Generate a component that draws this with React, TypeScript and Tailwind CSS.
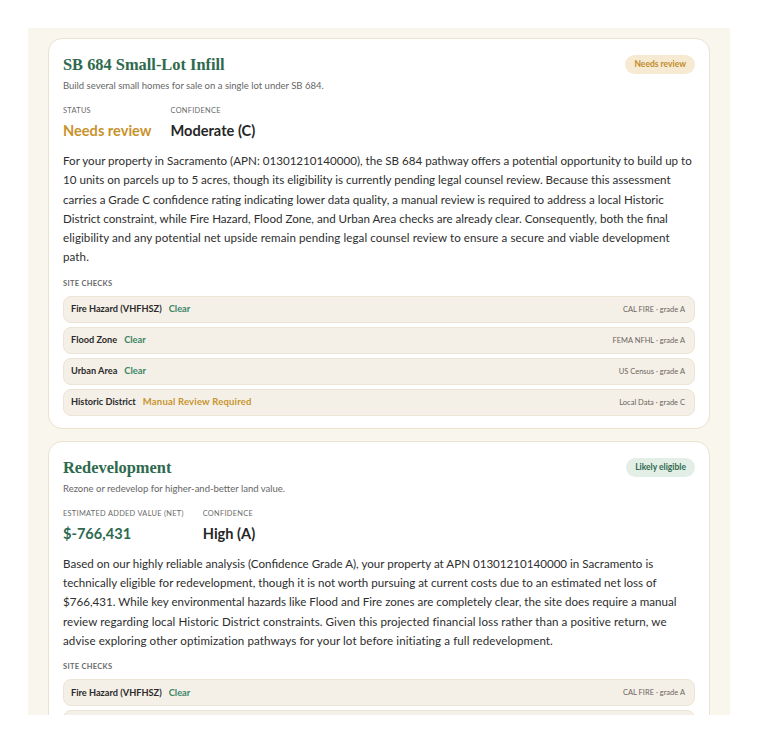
import React from 'react';

type Check = {
  name: string;
  status: string;
  tone: 'clear' | 'review';
  source: string;
};

type Pathway = {
  title: string;
  subtitle: string;
  badge: string;
  badgeTone: 'review' | 'eligible';
  leftLabel: string;
  leftValue: string;
  leftTone: 'gold' | 'green';
  confidence: string;
  summary: string;
  summaryTail: string;
  checks: Check[];
};

const siteChecks: Check[] = [
  { name: 'Fire Hazard (VHFHSZ)', status: 'Clear', tone: 'clear', source: 'CAL FIRE · grade A' },
  { name: 'Flood Zone', status: 'Clear', tone: 'clear', source: 'FEMA NFHL · grade A' },
  { name: 'Urban Area', status: 'Clear', tone: 'clear', source: 'US Census · grade A' },
  { name: 'Historic District', status: 'Manual Review Required', tone: 'review', source: 'Local Data · grade C' },
];

const pathways: Pathway[] = [
  {
    title: 'SB 684 Small-Lot Infill',
    subtitle: 'Build several small homes for sale on a single lot under SB 684.',
    badge: 'Needs review',
    badgeTone: 'review',
    leftLabel: 'Status',
    leftValue: 'Needs review',
    leftTone: 'gold',
    confidence: 'Moderate (C)',
    summary:
      'For your property in Sacramento (APN: 01301210140000), the SB 684 pathway offers a potential opportunity to build up to 10 units on parcels up to 5 acres, though its eligibility is currently pending legal counsel review. Because this assessment carries a Grade C confidence rating indicating lower data quality, a manual review is required to address a local Historic District constraint, while Fire Hazard, Flood Zone, and Urban Area checks are already clear. Consequently, both the final ',
    summaryTail:
      'eligibility and any potential net upside remain pending legal counsel review to ensure a secure and viable development path.',
    checks: siteChecks,
  },
  {
    title: 'Redevelopment',
    subtitle: 'Rezone or redevelop for higher-and-better land value.',
    badge: 'Likely eligible',
    badgeTone: 'eligible',
    leftLabel: 'Estimated added value (net)',
    leftValue: '$-766,431',
    leftTone: 'green',
    confidence: 'High (A)',
    summary:
      'Based on our highly reliable analysis (Confidence Grade A), your property at APN 01301210140000 in Sacramento is technically eligible for redevelopment, though it is not worth pursuing at current costs due to an estimated net loss of $766,431. While key environmental hazards like Flood and Fire zones are completely clear, the site does require a manual ',
    summaryTail:
      'review regarding local Historic District constraints. Given this projected financial loss rather than a positive return, we advise exploring other optimization pathways for your lot before initiating a full redevelopment.',
    checks: siteChecks,
  },
];

const CheckRow: React.FC<{ check: Check }> = ({ check }) => (
  <div className="flex h-[27px] shrink-0 items-center justify-between rounded-lg border border-[#ece4d4] bg-[#f5f0e7] pl-[7px] pr-[9px]">
    <div className="flex items-center gap-[7px] font-bold">
      <span className="text-[9.2px] text-[#2b2b2b]">{check.name}</span>
      <span
        className={
          check.tone === 'clear'
            ? 'text-[9.3px] text-[#3a8566]'
            : 'text-[9.5px] tracking-[0.02em] text-[#c8942f]'
        }
      >
        {check.status}
      </span>
    </div>
    <span className="text-[7.5px] text-[#6a6560]">{check.source}</span>
  </div>
);

const PathwayCard: React.FC<{ p: Pathway }> = ({ p }) => (
  <div className="shrink-0 rounded-[14px] border border-[#ebe2cf] bg-white px-[14px] pt-4 pb-3">
    <div className="flex items-start justify-between">
      <h2 className="font-['Liberation_Serif',serif] text-[16.4px] leading-[20px] font-bold text-[#2e6a4e]">
        {p.title}
      </h2>
      <span
        className={
          p.badgeTone === 'review'
            ? 'rounded-full bg-[#f6ead2] px-[9px] py-[4px] text-[8.5px] leading-[11px] font-bold text-[#c28b2a]'
            : 'rounded-full bg-[#e3eee7] px-[9px] py-[4px] text-[8.5px] leading-[11px] font-bold text-[#2e6a4e]'
        }
      >
        {p.badge}
      </span>
    </div>
    <p className="mt-1 text-[9.5px] leading-[14px] text-[#666]">{p.subtitle}</p>

    <div className="mt-[13px] flex gap-[19px]">
      <div className="flex flex-col">
        <span className="text-[7.4px] leading-[10px] tracking-[0.04em] text-[#6a6a6a] uppercase">
          {p.leftLabel}
        </span>
        <span
          className={
            p.leftTone === 'gold'
              ? 'mt-[5px] text-[14.6px] leading-[20px] font-bold text-[#c8922d]'
              : 'mt-[5px] text-[14.6px] leading-[20px] font-bold text-[#2e6a4e]'
          }
        >
          {p.leftValue}
        </span>
      </div>
      <div className="flex flex-col">
        <span className="text-[7.4px] leading-[10px] tracking-[0.04em] text-[#6a6a6a] uppercase">
          Confidence
        </span>
        <span className="mt-[5px] text-[14.6px] leading-[20px] font-bold text-[#262626]">
          {p.confidence}
        </span>
      </div>
    </div>

    <p className="mt-[10px] text-[11.6px] leading-[19.3px] text-[#2e2e2e]">
      {p.summary}
      <span className="tracking-[0.08px]">{p.summaryTail}</span>
    </p>

    <div className="mt-[12px] text-[7.5px] leading-[10px] font-bold tracking-[0.04em] text-[#6a6a6a] uppercase">
      Site checks
    </div>
    <div className="mt-[7px] flex flex-col gap-1">
      {p.checks.map((c) => (
        <CheckRow key={c.name} check={c} />
      ))}
    </div>
  </div>
);

const App: React.FC = () => {
  return (
    <div className="min-h-screen bg-white p-7 font-['Lato','Noto_Sans',sans-serif]">
      <div className="flex h-[687px] flex-col gap-3 overflow-hidden bg-[#f9f6ee] pt-[10px] pr-5 pl-5">
        {pathways.map((p) => (
          <PathwayCard key={p.title} p={p} />
        ))}
      </div>
    </div>
  );
};

export default App;
